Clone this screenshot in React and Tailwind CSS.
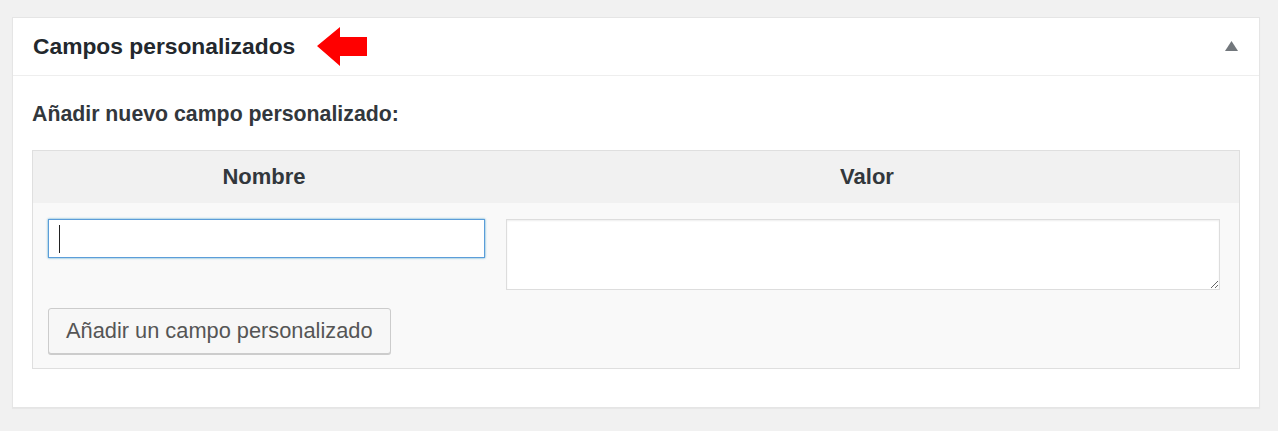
import React from "react";

const font = { fontFamily: '"Liberation Sans", Arial, sans-serif' };

const CustomFieldsBox = () => {
  return (
    <div className="min-h-[431px] bg-[#f1f1f1] pt-[17px] pl-[12px]" style={font}>
      <div className="w-[1248px] border border-[#e5e5e5] bg-white shadow-[0_1px_1px_rgba(0,0,0,0.04)]">
        {/* header */}
        <div className="flex h-[58px] items-center justify-between border-b border-[#eeeeee] pl-[20px] pr-[21px]">
          <div className="flex items-center">
            <h2 className="text-[22.8px] font-bold leading-none text-[#23282d]">
              Campos personalizados
            </h2>
            <svg width="50" height="40" viewBox="0 0 50 40" className="ml-[22px]">
              <polygon points="0,19 23,0 23,10 50,10 50,29 23,29 23,39" fill="#ff0000" />
            </svg>
          </div>
          <svg width="13" height="10" viewBox="0 0 13 10" className="mt-[-1px]">
            <polygon points="6.5,0 13,10 0,10" fill="#72777c" />
          </svg>
        </div>

        {/* body */}
        <div className="px-[19px] pt-[28px] pb-[38px]">
          <p className="text-[21.3px] font-bold leading-none text-[#32373c]">
            Añadir nuevo campo personalizado:
          </p>
          <div className="mt-[25px] border border-[#dfdfdf] bg-[#f9f9f9]">
            <div className="grid h-[52px] grid-cols-[462px_1fr] items-center bg-[#f1f1f1] pb-[1px] text-[22px] font-bold text-[#32373c]">
              <div className="text-center">Nombre</div>
              <div className="text-center">Valor</div>
            </div>
            <div className="grid grid-cols-[462px_1fr] pt-[16px]">
              <div className="pl-[15px] pr-[10px]">
                <div className="flex h-[39px] items-center border border-[#5b9dd9] bg-white pl-[10px] shadow-[0_0_2px_rgba(30,140,190,0.8)]">
                  <span className="h-[28px] w-[1px] bg-[#222222]" />
                </div>
              </div>
              <div className="pl-[11px] pr-[19px]">
                <textarea className="block h-[71px] w-full border border-[#dddddd] bg-white shadow-[inset_0_1px_2px_rgba(0,0,0,0.07)] outline-none" />
              </div>
            </div>
            <div className="pl-[15px] pt-[18px] pb-[14px]">
              <button
                type="button"
                className="h-[46px] rounded-[3px] border border-[#cccccc] bg-[#f7f7f7] px-[17px] text-[21.8px] text-[#555555] shadow-[0_1px_0_#cccccc]"
              >
                Añadir un campo personalizado
              </button>
            </div>
          </div>
        </div>
      </div>
    </div>
  );
};

export default function App() {
  return <CustomFieldsBox />;
}
